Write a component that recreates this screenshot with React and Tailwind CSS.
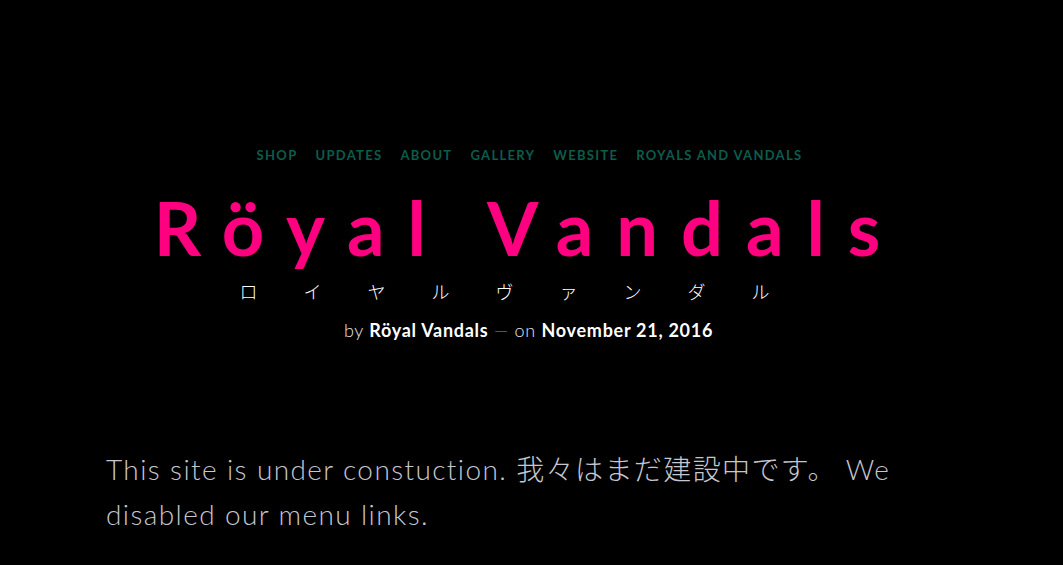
import React from 'react';

const navItems = ['Shop', 'Updates', 'About', 'Gallery', 'Website', 'Royals and Vandals'];
const kana = ['ロ', 'イ', 'ヤ', 'ル', 'ヴ', 'ァ', 'ン', 'ダ', 'ル'];

export default function App() {
  return (
    <div className="min-h-[565px] bg-black font-['Lato','Noto_Sans_CJK_JP',sans-serif] text-[#c9c9d2]">
      <header className="flex flex-col items-center pt-[146px]">
        {/* Nav */}
        <nav className="flex items-center gap-[18px] pr-[4px] text-[13px] font-bold uppercase tracking-[0.1em] text-[#0c5c4c]">
          {navItems.map((item) => (
            <span key={item}>{item}</span>
          ))}
        </nav>

        {/* Title */}
        <h1 className="mt-[21px] pr-[6px] text-[74px] font-bold leading-[82px] tracking-[0.31em] text-[#ff0080]">
          Röyal Vandals
        </h1>

        {/* Katakana */}
        <div className="mt-[10px] flex gap-[46px] pr-[54px] text-[18px] leading-[24px] text-white font-['Noto_Sans_CJK_JP',sans-serif] font-light">
          {kana.map((k, i) => (
            <span key={i}>{k}</span>
          ))}
        </div>

        {/* Byline */}
        <p className="mt-[16px] pr-[6px] text-[18px] leading-[22px] tracking-[0.04em] font-light text-[#e4e4ee]">
          by <span className="font-bold text-white">Röyal Vandals</span> <span className="text-[#9a9aa4]">—</span> on{' '}
          <span className="font-bold text-white">November 21, 2016</span>
        </p>
      </header>

      {/* Content */}
      <main className="mx-auto mt-[106px] max-w-[851px]">
        <p className="text-[28px] font-light leading-[45px] tracking-[0.05em] text-[#c6c6cf]">
          This site is under constuction. 我々はまだ建設中です。 We disabled our menu links.
        </p>
      </main>
    </div>
  );
}
